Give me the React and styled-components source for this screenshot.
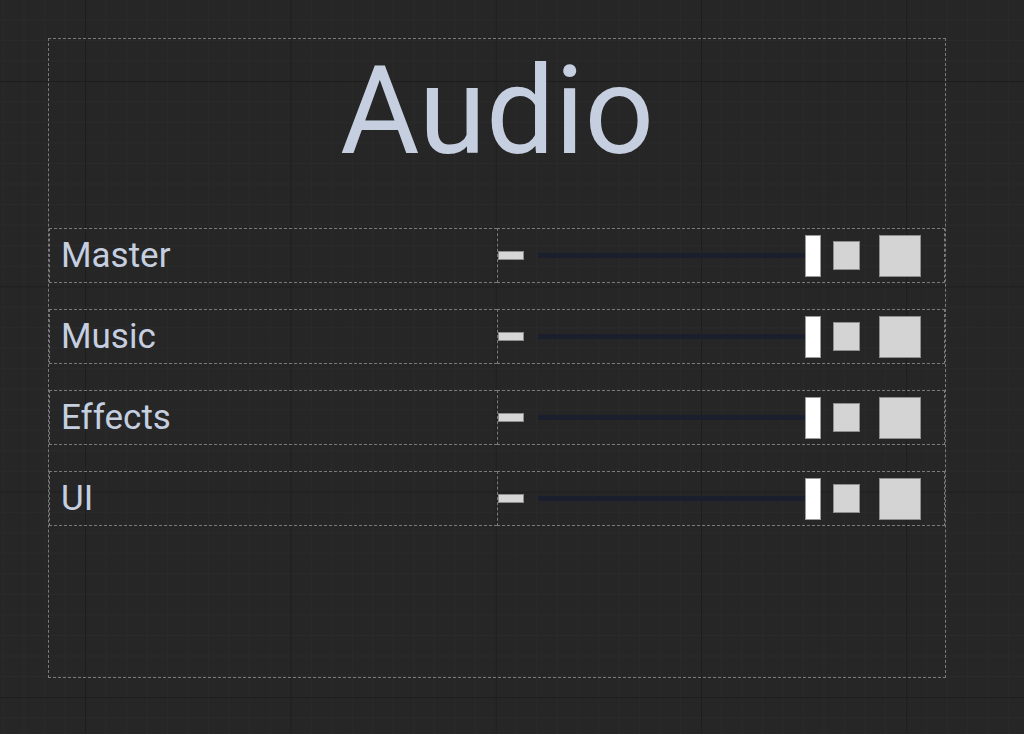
import React from 'react';
import styled, { createGlobalStyle } from 'styled-components';

const GlobalStyle = createGlobalStyle`
  html, body {
    margin: 0;
    padding: 0;
  }
  body {
    width: 1024px;
    height: 734px;
    overflow: hidden;
    background-color: #262626;
    background-image:
      linear-gradient(to right, #1d1d1d 1px, transparent 1px),
      linear-gradient(to bottom, #1d1d1d 1px, transparent 1px),
      linear-gradient(to right, #2a2a2a 1px, transparent 1px),
      linear-gradient(to bottom, #2a2a2a 1px, transparent 1px);
    background-size: 205.3px 205.3px, 205.3px 205.3px, 20.53px 20.53px, 20.53px 20.53px;
    background-position: 85px 0, 0 81px, 85px 0, 0 81px;
    font-family: Roboto, "Liberation Sans", sans-serif;
  }
`;

const Panel = styled.div`
  box-sizing: border-box;
  margin: 38px 0 0 48px;
  width: 898px;
  height: 640px;
  border: 1px dashed #7a7a7a;
  display: flex;
  flex-direction: column;
`;

const Title = styled.h1`
  margin: 0;
  height: 189px;
  display: flex;
  justify-content: center;
  align-items: flex-start;
  font-size: 122px;
  font-weight: 400;
  line-height: 1;
  padding-top: 12px;
  box-sizing: border-box;
  color: #c5cfe0;
`;

const Rows = styled.div`
  display: flex;
  flex-direction: column;
  gap: 26px;
`;

const Row = styled.div`
  display: flex;
  height: 55px;
`;

const Cell = styled.div`
  box-sizing: border-box;
  height: 100%;
  border: 1px dashed #7a7a7a;
  display: flex;
  align-items: center;
`;

const Label = styled(Cell)`
  width: 448px;
  flex: none;
  padding-left: 11px;
  font-size: 35px;
  color: #c5cfe0;
  border-right: none;
`;

const Controls = styled(Cell)`
  flex: 1;
  padding-right: 23px;
`;

const Minus = styled.div`
  box-sizing: border-box;
  width: 26px;
  height: 9px;
  background: #d6d6d6;
  border: 1px solid #8e8e8e;
`;

const Slider = styled.div`
  flex: 1;
  display: flex;
  align-items: center;
  margin-left: 14px;
`;

const Track = styled.div`
  flex: 1;
  height: 5px;
  background: #1b1e2c;
`;

const Thumb = styled.div`
  box-sizing: border-box;
  width: 16px;
  height: 42px;
  background: #ffffff;
  border: 1px solid #9a9a9a;
`;

const Square = styled.div`
  box-sizing: border-box;
  width: ${p => p.$size}px;
  height: ${p => p.$size + (p.$size < 30 ? 2 : 0)}px;
  margin-left: ${p => p.$gap}px;
  background: #d4d4d4;
  border: 1px solid #8e8e8e;
`;

const channels = ['Master', 'Music', 'Effects', 'UI'];

export default function App() {
  return (
    <>
      <GlobalStyle />
      <Panel>
        <Title>Audio</Title>
        <Rows>
          {channels.map(name => (
            <Row key={name}>
              <Label>{name}</Label>
              <Controls>
                <Minus />
                <Slider>
                  <Track />
                  <Thumb />
                </Slider>
                <Square $size={27} $gap={12} />
                <Square $size={42} $gap={19} />
              </Controls>
            </Row>
          ))}
        </Rows>
      </Panel>
    </>
  );
}
